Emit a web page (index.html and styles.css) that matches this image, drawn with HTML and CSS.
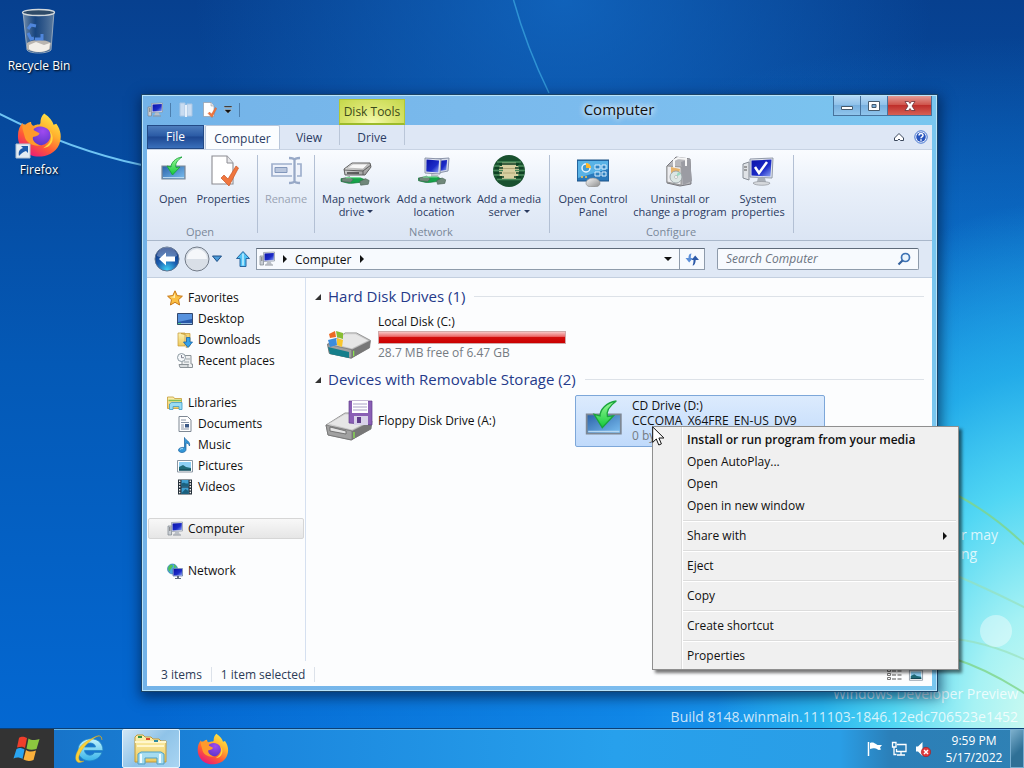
FILE: index.html
```html
<!DOCTYPE html>
<html lang="en">
<head>
<meta charset="utf-8">
<title>Computer</title>
<link rel="stylesheet" href="styles.css">
</head>
<body>
<svg class="defs" width="0" height="0" aria-hidden="true">
  <defs>
    <linearGradient id="screen" x1="0" y1="0" x2="1" y2="1"><stop offset="0" stop-color="#0a12a8"/><stop offset=".6" stop-color="#1c2cc8"/><stop offset="1" stop-color="#8fa6f4"/></linearGradient>
    <linearGradient id="metal" x1="0" y1="0" x2="1" y2="1"><stop offset="0" stop-color="#f8f8f8"/><stop offset="1" stop-color="#8b8b8b"/></linearGradient>
    <linearGradient id="panel" x1="0" y1="0" x2="1" y2="1"><stop offset="0" stop-color="#2a62a8"/><stop offset="1" stop-color="#7cc0f2"/></linearGradient>
    <linearGradient id="green" x1="0" y1="0" x2="0" y2="1"><stop offset="0" stop-color="#9dfa9a"/><stop offset="1" stop-color="#12c93a"/></linearGradient>
    <linearGradient id="fox" x1=".9" y1="0" x2=".3" y2="1"><stop offset="0" stop-color="#fff44f"/><stop offset=".4" stop-color="#ffb02e"/><stop offset=".7" stop-color="#ff5a36"/><stop offset="1" stop-color="#e8197a"/></linearGradient>
    <radialGradient id="foxglobe" cx=".6" cy=".25" r=".8"><stop offset="0" stop-color="#a04af0"/><stop offset="1" stop-color="#5b36c9"/></radialGradient>
    <linearGradient id="glass" x1="0" y1="0" x2="1" y2="0"><stop offset="0" stop-color="#a3b2bc" stop-opacity=".7"/><stop offset=".4" stop-color="#29486c" stop-opacity=".5"/><stop offset="1" stop-color="#8a9ba8" stop-opacity=".65"/></linearGradient>
    <radialGradient id="ball" cx=".5" cy=".95" r=".9"><stop offset="0" stop-color="#3fd0f6"/><stop offset=".5" stop-color="#1a5cae"/><stop offset="1" stop-color="#0b2f7c"/></radialGradient>
    <linearGradient id="folder" x1="0" y1="0" x2="0" y2="1"><stop offset="0" stop-color="#fdf3b4"/><stop offset="1" stop-color="#ecc95e"/></linearGradient>
    <linearGradient id="ie" x1="0" y1="0" x2="0" y2="1"><stop offset="0" stop-color="#c3f4fd"/><stop offset="1" stop-color="#36b3ea"/></linearGradient>

    <symbol id="i-pc" viewBox="0 0 16 16"><path d="M1 5h3.500v9H1z" fill="#c9ced4" stroke="#7c858e" stroke-width=".7"/><path d="M2 7h1.500M2 9h1.500" stroke="#555"/><path d="M4.500 1.500 15.500 1v9l-11 .5z" fill="#e4e7ee" stroke="#8a93a2" stroke-width=".7"/><path d="M5.500 2.500 14.800 2v7L5.500 9.500z" fill="url(#screen)"/><path d="M8.500 10.500h3l1.500 3H7z" fill="#b9bec5"/><path d="M6 13.500h8v1H6z" fill="#8f959d"/></symbol>
    <symbol id="i-open" viewBox="0 0 32 32"><path d="M5 11h23v13H5z" fill="url(#panel)" stroke="#7d8794" stroke-width="1.200"/><path d="M6 22.500h21" stroke="#b7d8f2"/><path d="M25 2C18 3 14 8 14 12l-4-1 5.500 9 7.500-8-4 .5c-1-4 1-7 6-10.500z" fill="url(#green)" stroke="#1ba43c" stroke-width=".9"/></symbol>
    <symbol id="i-check" viewBox="0 0 32 32"><path d="M5 1h15l6 7v21H5z" fill="#fff" stroke="#8c8c92" stroke-width="1.100"/><path d="M20 1v7h6" fill="#e7e7ea" stroke="#8c8c92"/><path d="m14 23 3-3 4 4 8-13 2.500 2L22 31z" fill="#f0763e" stroke="#c9572a" stroke-width=".7"/></symbol>
    <symbol id="i-rename" viewBox="0 0 32 32"><path d="M22 9H2v12h20M27 9h4v12h-4" fill="#eef2fb" stroke="#9fb0cd" stroke-width="1.700"/><path d="M5 12.500h12v5H5z" fill="#b9c6dd" stroke="#8297bb"/><path d="M19 3c3 0 5 0 5.500 2C25 3 27 3 30 3M24.500 5v21M19 28c3 0 5 0 5.500-2 .5 2 2.500 2 5.500 2" fill="none" stroke="#98a9c7" stroke-width="2.300"/></symbol>
    <symbol id="i-netcable" viewBox="0 0 32 32"><path d="M0 22h8l3-1h9l8 3v3l-8-1-8 1H8l-8-2z" fill="#16a34a" stroke="#0d7433" stroke-width=".7"/><path d="m1 22 8-2 4 3-3 3-9-1zM20 25l6-3 4 2-1 4-8 1z" fill="#70877a" stroke="#4b6355" stroke-width=".7"/><path d="M5 21h16" stroke="#7cf39c"/></symbol>
    <symbol id="i-mapdrive" viewBox="0 0 32 32"><use href="#i-netcable" y="3" width="32" height="30"/><path d="m4 14 8-6h18l1 4-6 8H5z" fill="url(#metal)" stroke="#616161"/><path d="m7 13 6-4h15l-5 5z" fill="#f7f7f7" stroke="#a9a9a9" stroke-width=".6"/><path d="m4 15 19 1 8-6M23 16v4" fill="none" stroke="#555" stroke-width=".9"/><path d="M7 18h12" stroke="#222" stroke-width="1.200"/></symbol>
    <symbol id="i-netloc" viewBox="0 0 32 32"><path d="m18 4 13-1-1 13-10 2z" fill="#d6dcea" stroke="#8a93a8"/><path d="m20 6 9-1-.7 10-8 1z" fill="url(#screen)"/><path d="m7 3 16 1-1 15-15-1z" fill="#dfe4ef" stroke="#8a93a8"/><path d="m8.500 4.500 12.500 1-.7 12-12-1z" fill="url(#screen)"/><path d="m13 19 7 1 2 4h-9z" fill="#b8bdc7"/><use href="#i-netcable" y="3" width="30" height="29"/></symbol>
    <symbol id="i-media" viewBox="0 0 32 32"><circle cx="16" cy="16" r="16" fill="#19512f"/><path d="M9 7h14v18H9zM6 11h20v10H6z" fill="#d7cfa0"/><path d="M4 7h24M1 11h6M25 11h6M0 15.500h10M22 15.500h10M1 20h6M25 20h6M4 24.500h24" stroke="#4b8a5c" stroke-width="1.500"/><path d="M6 9h20M2 13h8M22 13h8M1 18h8M23 18h8M4 22h7M21 22h7" stroke="#0d3c20" stroke-width="1.300"/><path d="M10 13.500h12M10 18h12" stroke="#a69c6c" stroke-width=".8"/></symbol>
    <symbol id="i-control" viewBox="0 0 32 32"><path d="M0 5h32v21H0z" fill="#2a79bb" stroke="#1c5386"/><path d="M1 6h30v8L1 23z" fill="#58b2e6"/><circle cx="9" cy="13" r="4" fill="#439cd4" stroke="#e7f5ff" stroke-width="1.500"/><path d="M9 13V8a5 5 0 0 1 5 5z" fill="#ffb72c"/><path d="M18 10h5v4h-5zM25 10h4v4h-4zM18 17h5v4h-5zM25 17h4v4h-4z" fill="#2d82c2" stroke="#d9efff"/><path d="M4 22h2M8 22h2" stroke="#ffc94b" stroke-width="1.500"/><path d="M9 28a7 5 0 0 1 14 0c0 3-3 4-7 4s-7-1-7-4z" fill="url(#metal)" stroke="#888" stroke-width=".6"/></symbol>
    <symbol id="i-uninstall" viewBox="0 0 32 32"><path d="m3 11 9-9 14 2 1 25-11 2-13-3z" fill="#b7b7bb" stroke="#77777d"/><path d="m17 7 9-3 2 22-9 4z" fill="#9b9ca3"/><path d="m3 11 14 1v18L3 27z" fill="#ececef" stroke="#888" stroke-width=".8"/><path d="M10 13V5l4-2 8 1v7" fill="none" stroke="#f6f6f6" stroke-width="2"/><path d="m7 12 9 2-2 9-7-1z" fill="#e8b36a"/><circle cx="12" cy="22" r="6" fill="#dce6e4" stroke="#919aa0" stroke-width=".8"/><path d="m12 22 2-5 3 2z" fill="#9bd9c1"/><circle cx="12" cy="22" r="1.500" fill="#fff" stroke="#999" stroke-width=".5"/></symbol>
    <symbol id="i-system" viewBox="0 0 32 32"><path d="m1 9 6-2v18l-6-2z" fill="#dfe2e6" stroke="#878d96"/><path d="M2 12h3M2 15h3" stroke="#555"/><path d="m8 4 23-1-1 20-22-1z" fill="#e3e7ef" stroke="#9199a8"/><path d="m9.500 5.500 20-1-1 17-19-1z" fill="url(#screen)"/><path d="m13 12 4 6 8-11" fill="none" stroke="#fff" stroke-width="2.500"/><path d="m16 22 7 1 1 4h-9z" fill="#aab0b8"/><path d="M11 28c2-2 14-2 17 0 0 3-16 3-17 0z" fill="#d6d9dd" stroke="#90959c" stroke-width=".7"/></symbol>
    <symbol id="i-star" viewBox="0 0 16 16"><path d="m8 .8 2.200 4.800 5.200.6-3.900 3.500 1.100 5.300L8 12.300 3.400 15l1.100-5.300L.6 6.200l5.200-.6z" fill="#fbc043" stroke="#c77716"/><path d="M8 3 6.500 6.500 3 7l5 1z" fill="#fff0b4"/></symbol>
    <symbol id="i-desktop" viewBox="0 0 16 16"><path d="M.5 2.500h15v11H.5z" fill="#2858a8" stroke="#33486e"/><path d="M1 3h14v5L1 11z" fill="#5792de"/><path d="M1 12.500h14" stroke="#98bde2"/><path d="M1 12.500h3" stroke="#57d88b"/></symbol>
    <symbol id="i-downloads" viewBox="0 0 16 16"><path d="M1 1h7v13H1z" fill="url(#folder)" stroke="#c59a35" stroke-width=".7"/><path d="M4 1.500h9V14l-4 1.500V3z" fill="#f1d578" stroke="#c59a35" stroke-width=".7"/><path d="M9.500 5.500h3.500V10h2.500L11 15.500 6.500 10h3z" fill="#36a1e8" stroke="#1765a8" stroke-width=".8"/></symbol>
    <symbol id="i-recent" viewBox="0 0 16 16"><path d="M5 2.500h9V11h1.500v3.500H5z" fill="#eef0f1" stroke="#8b9297"/><path d="M7 9h5M7 11.500h5M9 6h4" stroke="#9ba3a8"/><path d="M2 11.500h9v3H3z" fill="#d8dcde" stroke="#8b9297"/><circle cx="4.500" cy="4.500" r="4" fill="#f5f8fa" stroke="#8d9aa3"/><path d="M4.500 2v2.700H7" fill="none" stroke="#667" stroke-width=".8"/></symbol>
    <symbol id="i-lib" viewBox="0 0 16 16"><path d="M.5 2h6l1 1.500h7v10H.5z" fill="url(#folder)" stroke="#c59a35" stroke-width=".8"/><path d="M1.500 5.500h13" stroke="#7fbf57" stroke-width="1.500"/><path d="M2.500 14.500V9l2-1.500H15V14.500h-3v-3H6v3z" fill="#9adcf3" stroke="#3e9bc8" stroke-width=".8"/></symbol>
    <symbol id="i-doc" viewBox="0 0 16 16"><path d="M2 .5h8.500L14 4v11.500H2z" fill="#fff" stroke="#7e8894"/><path d="M4 4h5M4 6.500h8M4 9h3M4 11h3M4 13h8" stroke="#8895a6"/><path d="M8 8h4v3.500H8z" fill="#3c5a86"/></symbol>
    <symbol id="i-music" viewBox="0 0 16 16"><path d="M7.500.5c1 3 6 3.500 5 8.500-.5-2-2-3-3.500-3v6.500c0 2-2 3-4 3S1.500 14.500 1.500 13s2-3 6-2.500z" fill="#3497d8" stroke="#155f9c" stroke-width=".7"/><path d="M3 12.500c1-1 2-1 3-.8" stroke="#bfe5fb" fill="none"/></symbol>
    <symbol id="i-pic" viewBox="0 0 16 16"><path d="M.5 2.500h15v11.500H.5z" fill="#fff" stroke="#8b97a3"/><path d="M2 4h12v8.500H2z" fill="#8ed0f4"/><path d="m2 9 4-2 3 2 5 1v2.500H2z" fill="#206a77"/><path d="M2 11.500h12v1H2z" fill="#12414f"/></symbol>
    <symbol id="i-video" viewBox="0 0 16 16"><path d="M1 .5h14v15H1z" fill="#26313b"/><path d="M4.500 1h7v6.500h-7zM4.500 8.500h7V15h-7z" fill="#3f9fd0"/><path d="M4.500 5c3-3 4 1 7-1v3.500h-7zM4.500 14l4-4 3 2v3h-7z" fill="#1b617f"/><path d="M2.700 1.500v14M13.300 1.500v14" stroke="#fff" stroke-width="1.300" stroke-dasharray="1.500 1.300"/></symbol>
    <symbol id="i-network" viewBox="0 0 16 16"><circle cx="5.500" cy="6" r="5" fill="#4aa9e0" stroke="#276fa5" stroke-width=".6"/><path d="M2 3c2-2 4-1 4 0S3 6 3 8 1 7 1 5zM7 1l3 3-3 1z" fill="#4fc05a"/><path d="M6 5.500h9.500v7.500H6z" fill="#dbe2ee" stroke="#556d9d" stroke-width=".7"/><path d="M6.500 6h8.500v6.500H6.500z" fill="url(#screen)"/><path d="M10 13h2v2h-2zM8 15h6v1H8z" fill="#5f6a7c"/></symbol>
    <symbol id="i-drivebox" viewBox="0 0 48 30"><path d="M1 13 20 1h12l15 8-1 8-20 11L3 23z" fill="url(#metal)" stroke="#7c7c7c" stroke-width=".8"/><path d="M3 12 20 2h11l14 7-18 9z" fill="#e6e6e6" stroke="#b9b9b9" stroke-width=".5"/><path d="M1 13l26 6v9L3 23z" fill="#a1a1a1" stroke="#6c6c6c" stroke-width=".7"/><path d="m27 19 20-10-1 8-19 11z" fill="#777"/><path d="M29 20v6" stroke="#8bef4b" stroke-width="1.200"/></symbol>
    <symbol id="i-hdd" viewBox="0 0 48 32"><use href="#i-drivebox" y="4" width="48" height="28"/><path d="m3 19 21 5v6L5 26z" fill="#167f8b"/><path d="m4 6 6-3 1 6-6 1z" fill="#ed6a24"/><path d="m11 3 7 2v6l-6-2z" fill="#88bd34"/><path d="m3 12 8-2 1 7-7 2z" fill="#3c8cdc"/><path d="m12 10 6 2-1 7-5-2z" fill="#f9c62c"/></symbol>
    <symbol id="i-floppy" viewBox="0 0 48 42"><use href="#i-drivebox" y="12" width="48" height="30"/><path d="m5 27 16 4v3L5 31z" fill="#e5e5e5" stroke="#555" stroke-width=".7"/><path d="M24 1h23v24l-23-2z" fill="#8a5fb5" stroke="#5f3c8a" stroke-width=".7"/><path d="M27 1h16v12H27z" fill="#fff"/><path d="M28 4h14M28 7h14M28 10h14" stroke="#a9a2c5"/><path d="M29 16h14v9H29z" fill="#d9d2ea"/><path d="M32 17h4v6h-4z" fill="#5f3c8a"/></symbol>
    <symbol id="i-fox" viewBox="0 0 48 48"><path d="M29 1c6 4 9 8 10 12l3-1c5 7 6 15 3 22-4 9-13 13-22 13C11 47 1 38 1 25c0-6 2-11 5-14 0 2 1 3 2 4 2-4 5-5 7-5 0 2 1 4 3 4 4-2 7 0 7-3 0-4 1-7 4-10z" fill="url(#fox)"/><path d="M16 20c2-5 12-8 18-1 5 7-1 16-9 16-7 0-12-8-9-15z" fill="url(#foxglobe)"/><path d="M6 13c5-1 10 1 13 2-1 1-2 2-1 4l6 3c-1 3-4 3-7 4-1 4 3 8 9 9-8 2-17-3-18-10C7 20 5 17 6 13z" fill="#ff9a2c"/><path d="M35 20c6 6 3 17-7 18 8-5 10-10 7-18z" fill="#ffd83e"/></symbol>
  </defs>
</svg>

<main class="desktop">
  <svg class="wallpaper" viewBox="0 0 1024 728" preserveAspectRatio="none" aria-hidden="true">
    <g fill="none">
      <path d="M513-2Q526 46 549 93" stroke="#37a0dc" stroke-width="1.500" opacity=".8"/>
      <path d="M-4 112Q70 150 142 165" stroke="#6fc4f3" stroke-width="2"/>
      <path d="M955 494Q995 515 1030 550M955 659Q990 670 1030 697" stroke="#7fd488" stroke-width="2" opacity=".8"/>
      <path d="M955 575Q990 590 1030 610M930 638Q975 636 1030 662" stroke="#98dfb4" stroke-width="2" opacity=".6"/>
    </g>
    <circle cx="996" cy="631" r="16" fill="#fff" opacity=".4"/>
  </svg>

  <nav class="shortcuts" aria-label="Desktop">
    <a class="shortcut" href="#bin">
      <svg width="48" height="48" viewBox="0 0 48 48"><path d="m8 4 4 38c2 4 21 4 24 0l3-38z" fill="url(#glass)" stroke="#a9b8c4" stroke-width=".8"/><path d="M12 35c5-4 19-4 24 0l-1 6c-4 4-19 4-23 0z" fill="#b9b5b0"/><path d="m14 37 7-3 8 3 6-2-1 6c-4 4-16 4-20 0z" fill="#f2efe9"/><ellipse cx="23.500" cy="4.500" rx="16" ry="3" fill="#2f4b68" stroke="#d2d8dc" stroke-width="1.300"/><path d="m13 21 3-4 5 1M13 25l3 6 3-1M20 31l7 0 0-5" fill="none" stroke="#4f86dc" stroke-width="3"/></svg>
      <span>Recycle Bin</span>
    </a>
    <a class="shortcut" href="#firefox">
      <svg width="48" height="48" viewBox="0 0 48 48"><use href="#i-fox" x="2" width="45" height="46"/><path d="M1 32h14v14H1z" fill="#e4ecf3" stroke="#b6c4d2"/><path d="M4 44c-1-5 1-7 4-8l-2-2h7v7l-2-2c-3 1-4 2-7 5z" fill="#1d5bab"/></svg>
      <span>Firefox</span>
    </a>
  </nav>

  <div class="notice"><span>r may</span><span>ng</span></div>
  <div class="build"><span>Windows Developer Preview</span><span>Build 8148.winmain.111103-1846.12edc706523e1452</span></div>

  <section class="window" aria-label="Computer">
    <header class="titlebar">
      <div class="quick">
        <svg width="16" height="16"><use href="#i-pc"/></svg><i class="bar"></i>
        <button aria-label="New folder"><svg width="16" height="16" viewBox="0 0 16 16"><path d="M2 1h5v13H2zM9 2h5v12H9z" fill="#c9dcf1" stroke="#aac6e4"/><path d="M7 3h2v12H7z" fill="#e6f0fb"/></svg></button>
        <button aria-label="Properties"><svg width="16" height="16"><use href="#i-check"/></svg></button>
        <button aria-label="Customize toolbar"><svg width="8" height="8" viewBox="0 0 8 8"><path d="M0 0h8v1.500H0zM0 3.500h8L4 7.500z" fill="#111" stroke="#fff" stroke-width=".4"/></svg></button><i class="bar"></i>
      </div>
      <span class="disktools">Disk Tools</span>
      <h1>Computer</h1>
      <div class="controls">
        <button aria-label="Minimize"><svg width="14" height="12" viewBox="0 0 14 12"><path d="M1.500 6.500h11v3h-11z" fill="#fff" stroke="#465a6c"/></svg></button>
        <button aria-label="Maximize"><svg width="14" height="12" viewBox="0 0 14 12"><path d="M1.500 1.500h11v9h-11zM5 4.500v3h4v-3z" fill="#fff" fill-rule="evenodd" stroke="#465a6c"/></svg></button>
        <button class="close" aria-label="Close"><svg width="14" height="12" viewBox="0 0 14 12"><path d="m2 1.500h3.500L7 3.500l1.500-2H12L9 6l3 4.500H8.500L7 8.500l-1.500 2H2L5 6z" fill="#fff" stroke="#6b3036" stroke-width=".8"/></svg></button>
      </div>
    </header>

    <div class="tabs">
      <button class="tab file">File</button>
      <button class="tab current">Computer</button>
      <button class="tab view">View</button>
      <button class="tab drive">Drive</button>
      <button class="icon collapse" aria-label="Minimize ribbon"><svg width="12" height="10" viewBox="0 0 12 10"><path d="m1.500 6 4.500-4.500L10.500 6v2.500h-3L6 7 4.500 8.500h-3z" fill="#fff" stroke="#39465a"/></svg></button>
      <button class="icon" aria-label="Help"><svg width="14" height="14" viewBox="0 0 14 14"><circle cx="7" cy="7" r="6.200" fill="#fff" stroke="#3c6fcf"/><circle cx="7" cy="7" r="4.800" fill="#2754bd"/><path d="M5 5.500c0-3 4.200-2.500 4 0C9 7 7 6.700 7 8.200M7 9.300v1.500" fill="none" stroke="#fff" stroke-width="1.500"/></svg></button>
    </div>

    <div class="ribbon">
      <div class="group g-open"><div class="tools">
        <button class="w46"><svg><use href="#i-open"/></svg>Open</button>
        <button class="w54"><svg><use href="#i-check"/></svg>Properties</button></div><p>Open</p></div>
      <div class="group"><div class="tools"><button class="w56" disabled><svg><use href="#i-rename"/></svg>Rename</button></div></div>
      <div class="group g-network"><div class="tools">
        <button class="w74"><svg><use href="#i-mapdrive"/></svg><span>Map network<br>drive<i class="drop"></i></span></button>
        <button class="w82"><svg><use href="#i-netloc"/></svg><span>Add a network<br>location</span></button>
        <button class="w68"><svg><use href="#i-media"/></svg><span>Add a media<br>server<i class="drop"></i></span></button></div><p>Network</p></div>
      <div class="group g-configure"><div class="tools">
        <button class="w74"><svg><use href="#i-control"/></svg><span>Open Control<br>Panel</span></button>
        <button class="w100"><svg><use href="#i-uninstall"/></svg><span>Uninstall or<br>change a program</span></button>
        <button class="w56"><svg><use href="#i-system"/></svg><span>System<br>properties</span></button></div><p>Configure</p></div>
    </div>

    <div class="navbar">
      <button class="icon" aria-label="Back"><svg width="26" height="26" viewBox="0 0 26 26"><circle cx="13" cy="13" r="12" fill="url(#ball)" stroke="#5d728f"/><path d="M3 10a10 9 0 0 1 20 0c-5 3-14 3-20 0z" fill="#fff" opacity=".3"/><path d="m5 13 7-6.500v4h9v5h-9v4z" fill="#fff"/></svg></button>
      <button class="icon forward" aria-label="Forward"><svg width="26" height="26" viewBox="0 0 26 26"><circle cx="13" cy="13" r="12" fill="#d9dfe7" stroke="#727b88"/><path d="M3 13a10 10 0 0 1 20 0z" fill="#f5f7fa"/></svg></button>
      <button class="icon recent" aria-label="Recent locations"><svg width="10" height="8" viewBox="0 0 10 8"><path d="M.5 1h9L5 6.500z" fill="#4b9ad8" stroke="#1d4f86"/></svg></button>
      <button class="icon up" aria-label="Up"><svg width="16" height="18" viewBox="0 0 16 18"><path d="m8 1.500 6.500 7H11v8H5v-8H1.500z" fill="#4fc1f5" stroke="#28659f"/><path d="M8 3.500v12" stroke="#a6e5fd" stroke-width="2"/></svg></button>
      <div class="address">
        <svg width="16" height="16"><use href="#i-pc"/></svg><i class="arrow"></i><a href="#computer">Computer</a><i class="arrow"></i>
        <button class="icon history" aria-label="Previous locations"><i class="down"></i></button>
        <button class="icon refresh" aria-label="Refresh"><svg width="16" height="16" viewBox="0 0 16 16"><path d="M7.500 2.500C5.500 2.500 4.500 4 4.500 7H1.500l3.700 4.500L9 7H6.800c0-2 .2-3 .7-4.500z" fill="#5c8fd8"/><path d="M8.500 14.500c2 0 3-2 3.200-5.500H15L11.200 4.500 7.500 9h2c0 2-.2 4-1 5.500z" fill="#2c59a8"/></svg></button>
      </div>
      <label class="search"><input type="text" placeholder="Search Computer" aria-label="Search Computer"><svg width="14" height="14" viewBox="0 0 14 14"><circle cx="8.500" cy="5.500" r="4" fill="#e9f4fd" stroke="#3d72b4" stroke-width="1.700"/><path d="M5.500 8.500 1.500 12.500" stroke="#335f9c" stroke-width="2.200"/></svg></label>
    </div>

    <div class="body">
      <nav class="tree" aria-label="Folders">
        <ul><li><a href="#f"><svg><use href="#i-star"/></svg>Favorites</a></li>
          <li class="sub"><a href="#d"><svg><use href="#i-desktop"/></svg>Desktop</a></li>
          <li class="sub"><a href="#dl"><svg><use href="#i-downloads"/></svg>Downloads</a></li>
          <li class="sub"><a href="#r"><svg><use href="#i-recent"/></svg>Recent places</a></li></ul>
        <ul><li><a href="#l"><svg><use href="#i-lib"/></svg>Libraries</a></li>
          <li class="sub"><a href="#doc"><svg><use href="#i-doc"/></svg>Documents</a></li>
          <li class="sub"><a href="#m"><svg><use href="#i-music"/></svg>Music</a></li>
          <li class="sub"><a href="#p"><svg><use href="#i-pic"/></svg>Pictures</a></li>
          <li class="sub"><a href="#v"><svg><use href="#i-video"/></svg>Videos</a></li></ul>
        <ul><li><a class="chosen" href="#c"><svg><use href="#i-pc"/></svg>Computer</a></li></ul>
        <ul><li><a href="#n"><svg><use href="#i-network"/></svg>Network</a></li></ul>
      </nav>
      <div class="content">
        <h2><i class="fold"></i>Hard Disk Drives (1)</h2>
        <div class="tiles">
          <a class="tile" href="#c-drive"><svg class="hdd" width="48" height="32"><use href="#i-hdd"/></svg><span class="info"><span>Local Disk (C:)</span><span class="meter"></span><small>28.7 MB free of 6.47 GB</small></span></a>
        </div>
        <h2><i class="fold"></i>Devices with Removable Storage (2)</h2>
        <div class="tiles">
          <a class="tile" href="#a-drive"><svg width="48" height="42"><use href="#i-floppy"/></svg><span class="info"><span>Floppy Disk Drive (A:)</span></span></a>
          <a class="tile picked" href="#d-drive"><svg width="48" height="46" viewBox="0 0 32 31"><use href="#i-open" width="32" height="32"/></svg><span class="info"><span>CD Drive (D:)</span><span>CCCOMA_X64FRE_EN-US_DV9</span><small>0 bytes</small></span></a>
        </div>
      </div>
    </div>

    <footer class="status">
      <span>3 items</span><span>1 item selected</span>
      <button class="icon" aria-label="Details view"><svg width="16" height="12" viewBox="0 0 16 12"><path d="M1.500.5h3v2h-3zM1.500 4.500h3v2h-3zM1.500 8.500h3v2h-3z" fill="#fff" stroke="#777"/><path d="M6 2h4M11.500 2h4M6 6h4M11.500 6h4M6 10h4M11.500 10h4" stroke="#555"/></svg></button>
      <button class="icon" aria-label="Tiles view"><svg width="16" height="14"><use href="#i-pic"/></svg></button>
    </footer>
  </section>
</main>

<footer class="taskbar">
  <button class="start" aria-label="Start"><svg width="28" height="26" viewBox="0 0 28 26"><path d="M6 2c3-2 5-1 8 0l-2 10c-3-2-5-1-8-.5z" fill="#ef3e2b"/><path d="M15.500 2.500c3 2 6 2 11 .5l-3 10c-4 1-7 1-10-.5z" fill="#8cc63f"/><path d="M3.500 13c3-1.500 5-1 8 .5L9.500 23c-3-2-6-2-9-.5z" fill="#2aa4f0"/><path d="M13 14c3 2 6 2 10 .5L20.500 24c-4 1.500-7 1-10-.5z" fill="#fbb03b"/></svg></button>
  <button class="task" aria-label="Internet Explorer"><svg width="32" height="32" viewBox="0 0 32 32"><path d="M30 17.500H11.500c.5 5 7.500 6.500 10 2H29C24 32 5 30 5 17 5 3 30 1 30 17.500zM11.500 14h11c-.5-5-9.500-5.500-11 0z" fill="url(#ie)" fill-rule="evenodd" stroke="#2286c7" stroke-width=".8"/><path d="M29 7c0-6-5-5-11-1C8 10 1 21 3 27c2 5 8 1 8 1-4 1-6-1-5-5C8 16 17 7 23 4c4-2 5-1 6 3z" fill="#f8cf3a" stroke="#d9a61a" stroke-width=".4"/></svg></button>
  <button class="task active" aria-label="Computer"><svg width="34" height="32" viewBox="0 0 34 32"><path d="M1 4l2-2h6l2 2h6l2 2h6l2 2h5v21H1z" fill="url(#folder)" stroke="#c29a3b"/><path d="M1 9h31M3 13h27" stroke="#fff6cc" stroke-width="2"/><path d="M4 3h4v2H4z" fill="#329147"/><path d="M12 5h4v2h-4z" fill="#dd4a2d"/><path d="M20 7h4v2h-4z" fill="#2d8b9d"/><path d="M4 31V21l3-2h20l3 2v10h-7v-6H11v6z" fill="#a5dcf0" stroke="#4e9fc3"/><path d="M7 21v9M26 21v9" stroke="#f0fcff" stroke-width="2"/></svg></button>
  <button class="task" aria-label="Firefox"><svg width="32" height="32"><use href="#i-fox"/></svg></button>
  <div class="tray">
    <button aria-label="Action Center"><svg width="16" height="16" viewBox="0 0 16 16"><path d="M1.500 1v14" stroke="#fff" stroke-width="1.500"/><path d="M3 2c3-1 4 0 6 1l1.500 1H15l-2 2.500 1 2c-2 .8-3 .5-4-.5-2-1.500-5-.5-7 0z" fill="#fff"/></svg></button>
    <button aria-label="Network"><svg width="16" height="16" viewBox="0 0 16 16"><path d="M6 3.500h9v7H5.500V8M10 11v2.500M6 14h8" fill="none" stroke="#fff" stroke-width="1.300"/><path d="M1.500 1.500h3.500V6h-3.500zM3 6v7.500h2.500" fill="none" stroke="#fff" stroke-width="1.300"/></svg></button>
    <button aria-label="Volume muted"><svg width="16" height="16" viewBox="0 0 16 16"><path d="M1 5.500h2L7.500 1v14L3 10.500H1z" fill="#fff"/><circle cx="11" cy="11" r="4.700" fill="#e0383b" stroke="#9c1b22" stroke-width=".6"/><path d="m9 9 4 4M13 9l-4 4" stroke="#fff" stroke-width="1.500"/></svg></button>
    <time datetime="2022-05-17T21:59">9:59 PM<br>5/17/2022</time>
  </div>
  <button class="peek" aria-label="Show desktop"></button>
</footer>

<div class="menu" role="menu">
  <button class="strong" role="menuitem">Install or run program from your media</button>
  <button role="menuitem">Open AutoPlay...</button>
  <button role="menuitem">Open</button>
  <button role="menuitem">Open in new window</button>
  <hr><button class="more" role="menuitem">Share with<i class="arrow"></i></button>
  <hr><button role="menuitem">Eject</button>
  <hr><button role="menuitem">Copy</button>
  <hr><button role="menuitem">Create shortcut</button>
  <hr><button role="menuitem">Properties</button>
</div>
<svg class="cursor" width="13" height="20" viewBox="0 0 13 20" aria-hidden="true"><path d="M.7.900v15.500l3.600-3.400 2.500 6 2.600-1.100-2.500-5.900h5z" fill="#fff" stroke="#111"/></svg>
</body>
</html>
```
FILE: styles.css
```css
* { box-sizing: border-box; }
html, body { height: 100%; }
body {
  margin: 0;
  display: flex;
  flex-direction: column;
  overflow: hidden;
  font: 12px/15px "Open Sans", "Noto Sans", sans-serif;
  color: #111;
}
button { margin: 0; padding: 0; border: 0; background: none; font: inherit; color: inherit; }
a { color: inherit; text-decoration: none; }
ul, h1, h2, p { margin: 0; padding: 0; font-weight: 400; list-style: none; }
svg { display: block; flex: none; }
.defs { position: absolute; }

.desktop {
  position: relative;
  flex: 1;
  min-height: 0;
  background:
    radial-gradient(ellipse 32% 72% at 102% 100%, #d4fcf0 0%, #a6f2f4 22%, rgba(84, 218, 244, .95) 46%, rgba(44, 190, 238, .7) 68%, rgba(24, 160, 232, 0) 100%),
    radial-gradient(ellipse 85% 95% at 100% 100%, #2cb4f4 0%, rgba(20, 145, 238, .75) 45%, rgba(8, 100, 214, 0) 100%),
    radial-gradient(ellipse 36% 40% at 55% 0, rgba(20, 112, 204, .7), rgba(10, 90, 190, 0)),
    linear-gradient(#07408f, #0459b6 50%, #0468d2);
}
.wallpaper { position: absolute; inset: 0; width: 100%; height: 100%; }
.shortcuts { position: relative; display: flex; flex-direction: column; gap: 33px; width: 78px; padding-top: 8px; }
.shortcut { display: flex; flex-direction: column; align-items: center; gap: 2px; height: 71px; color: #fff; text-shadow: 1px 1px 2px #000; white-space: nowrap; }

.notice, .build { position: absolute; display: flex; flex-direction: column; color: #ffffffc8; font-size: 14px; white-space: nowrap; }
.notice { right: 26px; bottom: 165px; line-height: 19px; }
.build { right: 6px; bottom: 0; align-items: flex-end; line-height: 23px; }

.window {
  position: absolute;
  inset: 95px 87px 37px 142px;
  display: flex;
  flex-direction: column;
  padding: 0 4px 4px;
  border: 1px solid #b9e4fb;
  outline: 1px solid #1b4468;
  background: linear-gradient(90deg, #73b3e8, #7cbcee 60%, #79c6ef);
  box-shadow: 1px 4px 12px 3px #00183ca0;
}
.titlebar { display: flex; height: 29px; }
.quick { display: flex; align-items: center; gap: 7px; width: 192px; padding-bottom: 2px; }
.quick .bar { width: 1px; height: 14px; background: #4d7fae; }
.disktools {
  width: 66px;
  margin-top: 3px;
  line-height: 24px;
  text-align: center;
  color: #3b4a1a;
  background: radial-gradient(ellipse at 50% 100%, #f6fbb0, #dbe672 50%, #c5d84a);
  border: 1px solid #b4c832;
  border-bottom: 2px solid #9cbb2b;
}
.titlebar h1 { flex: 1; text-align: center; font-size: 15px; line-height: 27px; text-shadow: 0 0 6px #fff, 0 0 6px #fff; }
.controls { display: flex; height: 20px; width: 99px; border: 1px solid #47739d; border-top: 0; }
.controls button { flex: 0 0 27px; display: flex; align-items: center; justify-content: center; border-right: 1px solid #47739d; background: linear-gradient(#b4d8f4, #8dc0e9 50%, #78b0df 50%, #90c5ec); }
.controls .close { flex: 1; border: 0; background: linear-gradient(#e39a94, #d0564d 45%, #bf2f2b 50%, #d66055); }

.tabs { display: flex; height: 24px; background: #dee7f5; color: #2b3c63; }
.tab { line-height: 25px; }
.file { width: 57px; color: #fff; background: linear-gradient(#4d7dbd, #2b5ba5 45%, #1d4791 50%, #3a70bb); border: 1px solid #234a86; line-height: 22px; }
.current { width: 75px; margin-left: 1px; background: #fbfdff; border: 1px solid #b8c6da; border-bottom: 0; border-radius: 2px 2px 0 0; }
.view { width: 58px; }
.drive { width: 66px; height: 20px; border: solid #bac6d8; border-width: 0 1px; margin-left: 1px; }
.icon { display: flex; align-items: center; justify-content: center; flex: none; }
.collapse { margin-left: auto; }
.tabs .icon { width: 22px; }

.ribbon { display: flex; height: 92px; padding-top: 5px; background: linear-gradient(#fafcff, #e8eff9 45%, #dbe5f4); border-top: 1px solid #c8d3e3; border-bottom: 1px solid #a9b7ca; color: #2a3a5f; font-size: 11px; line-height: 13px; }
.group { display: flex; flex-direction: column; height: 78px; border-right: 1px solid #b3c0d4; }
.g-open { padding: 0 7px 0 3px; }
.g-network { padding: 0 6px 0 4px; }
.g-configure { padding: 0 7px 0 6px; }
.tools { display: flex; }
.tools button { display: flex; flex: none; flex-direction: column; align-items: center; height: 63px; white-space: nowrap; text-align: center; }
.tools svg { width: 32px; height: 32px; margin-bottom: 5px; }
.tools button:disabled { color: #9aa3b3; }
.group p { text-align: center; color: #7a8799; padding-top: 7px; }
.w46 { width: 46px; }
.w54 { width: 54px; }
.w56 { width: 56px; }
.w68 { width: 68px; }
.w74 { width: 74px; }
.w82 { width: 82px; }
.w100 { width: 100px; }
.drop { display: inline-block; margin: 0 0 3px 3px; border: 3px solid transparent; border-top-color: #2a3a5f; border-bottom: 0; }

.navbar { display: flex; align-items: center; height: 37px; padding: 0 13px 0 7px; background: #dfe8f5; border-bottom: 1px solid #c3cfdf; }
.forward { margin-left: 4px; }
.recent { width: 13px; }
.up { width: 16px; margin: 0 5px 0 12px; }
.address, .search { display: flex; align-items: center; height: 22px; background: #f7fafe; border: 1px solid #8e9bab; border-top-color: #5f6b7a; }
.address { flex: 1; gap: 8px; padding-left: 2px; }
.arrow { width: 0; border: 4px solid transparent; border-left-color: #111; border-right: 0; }
.history { margin-left: auto; width: 14px; }
.down { border: 4px solid transparent; border-top-color: #111; border-bottom: 0; }
.address .refresh { width: 25px; height: 20px; border-left: 1px solid #8e9bab; margin-left: -4px; }
.search { width: 202px; margin-left: 12px; padding: 0 7px 0 8px; border-radius: 2px; }
.search input { flex: 1; min-width: 0; padding: 0; border: 0; outline: 0; background: none; font: italic 12px/18px "Open Sans", sans-serif; }
.search input::placeholder { color: #6b7380; opacity: 1; }

.body { flex: 1; display: flex; min-height: 0; background: #fcfdfe; }
.tree { display: flex; flex-direction: column; gap: 21px; width: 159px; padding: 9px 1px 0; border-right: 1px solid #d5e0f0; }
.tree a { display: flex; align-items: center; gap: 5px; height: 21px; padding-left: 18px; border: 1px solid transparent; border-radius: 2px; }
.tree svg { width: 16px; height: 16px; }
.tree .sub a { padding-left: 28px; }
.tree .chosen { background: linear-gradient(#f8f8f8, #e6e6e6); border-color: #d6d6d6; }
.content { flex: 1; min-width: 0; padding: 8px 8px 0 9px; }
.content h2 { display: flex; align-items: center; gap: 7px; height: 21px; font-size: 15px; color: #253a8a; white-space: nowrap; }
.content h2::after { content: ""; flex: 1; height: 1px; margin-left: 2px; background: #dde2e8; }
.fold { border: 3px solid transparent; border-right-color: #333; border-bottom-color: #333; }
.tiles { display: flex; gap: 4px; padding: 5px 0 5px 6px; }
.tile { display: flex; align-items: center; gap: 5px; width: 250px; height: 52px; padding: 0 3px 1px; border: 1px solid transparent; border-radius: 2px; }
.tile .hdd { align-self: flex-end; margin-bottom: 2px; }
.picked { background: linear-gradient(#dcebfd, #c0dafb); border-color: #7da7d9; }
.info { flex: 1; display: flex; flex-direction: column; white-space: nowrap; }
.info small { font-size: 12px; line-height: 16px; color: #757b82; }
.meter { width: 188px; height: 13px; margin: 2px 0 1px; border: 1px solid #d0a9a9; background: linear-gradient(#f7c4c4, #ec6a6a 40%, #d20d0d 50%, #cb0000); }

.status { display: flex; align-items: center; height: 25px; padding: 2px 8px 0 5px; background: #fcfdfe; color: #2c3b57; }
.status span { padding: 0 9px; border-right: 1px solid #dce2ea; }
.status span + span { margin-right: auto; }
.status .icon { margin-left: 6px; }

.taskbar { display: flex; height: 40px; border-top: 1px solid #0c3f75; background: linear-gradient(90deg, #166fc4, #1b86dd 25%, #27a0ec 60%, #2a9ee6 82%, #2b7fb8 87%, #2f81b4); box-shadow: inset 0 1px #66b5ea; }
.start { display: flex; align-items: center; justify-content: center; width: 54px; background: #333; }
.task { display: flex; align-items: center; justify-content: center; width: 58px; margin-left: 4px; }
.start + .task { margin-left: 6px; }
.active { border: 1px solid #e3f4ff; border-radius: 2px; background: linear-gradient(135deg, #cfe5f5, #8fc3e8 50%, #a9d5f2); }
.tray { display: flex; align-items: center; gap: 8px; margin-left: auto; color: #fff; }
.tray time { width: 70px; text-align: center; line-height: 17px; }
.peek { width: 14px; margin-left: 1px; border: 1px solid #76add0; background: linear-gradient(135deg, #7db0cd, #2f7096 60%); }

.menu { position: absolute; left: 652px; top: 426px; display: flex; flex-direction: column; width: 307px; padding: 2px; border: 1px solid #8f8f8f; background: linear-gradient(90deg, transparent 28px, #dcdcdc 28px, #dcdcdc 29px, #fff 29px, #fff 30px, transparent 30px) #f0f0f0; box-shadow: 3px 3px 3px #0008; }
.menu button { display: flex; align-items: center; height: 22px; padding: 0 0 1px 32px; text-align: left; white-space: nowrap; }
.menu .strong { font-weight: 600; }
.menu .more { justify-content: space-between; padding-right: 9px; }
.menu hr { width: calc(100% - 28px); height: 2px; margin: 3px 0 3px 28px; border: 0; border-top: 1px solid #dcdcdc; background: #fff; }
.cursor { position: absolute; left: 652px; top: 426px; }
```
